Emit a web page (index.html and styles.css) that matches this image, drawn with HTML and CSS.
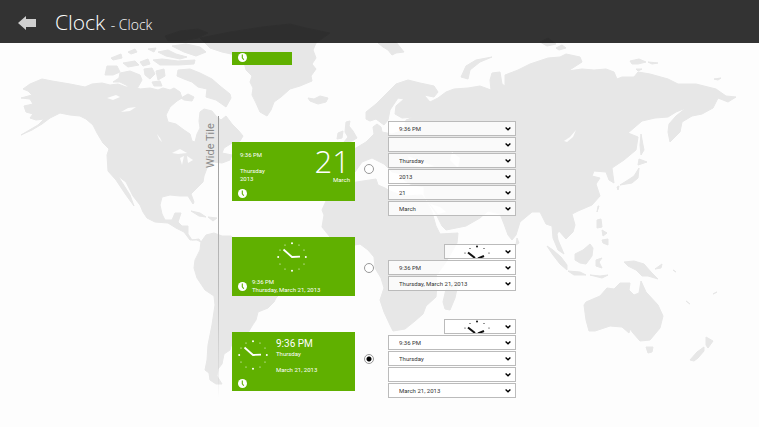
FILE: index.html
```html
<!DOCTYPE html>
<html lang="en">
<head>
    <meta charset="UTF-8">
    <meta name="viewport" content="width=device-width, initial-scale=1.0">
    <title>Clock</title>
    <link rel="stylesheet" href="styles.css">
</head>
<body>
    <svg class="map" viewBox="0 0 759 427" preserveAspectRatio="xMidYMin slice" aria-hidden="true">
        <!-- North America -->
        <path d="M23 89L30 84 42 79 52 81 70 84 85 87 92 84 102 83 110 85 118 84 126 87 134 86 140 89 150 88 158 90 163 88 170 90 174 88 180 92 182 98 177 101 170 107 166 115 168 122 176 124 184 130 190 134 192 141 195 142 197 134 200 128 199 121 200 112 204 109 212 111 216 116 221 120 226 116 232 124 238 130 243 136 240 141 232 143 224 148 222 153 232 155 230 160 222 163 214 162 207 168 204 176 203 182 196 189 191 194 194 202 193 204 188 196 180 196 170 195 162 197 160 205 162 214 165 220 172 220 175 213 181 213 178 222 182 226 188 226 188 234 192 240 199 239 201 242 197 240 190 240 184 232 176 228 168 223 155 222 147 218 143 212 140 205 133 196 126 182 118 176 130 195 134 206 126 195 116 180 108 171 107 155 109 149 103 143 97 133 93 125 86 119 80 116 70 115 60 113 50 118 42 124 32 130 21 135 38 125 44 119 36 120 30 118 33 114 26 112 24 106 33 104 30 99 21 98 32 95 28 91Z"/>
        <!-- Arctic islands -->
        <path d="M107 66L117 66 120 72 113 75 105 75ZM120 73L130 71 140 75 142 80 138 87 128 86 120 82 113 82 119 78ZM123 63L135 61 139 65 128 67ZM111 58L121 54 122 58 113 60ZM140 62L148 59 150 64 143 66ZM128 52L135 49 137 52 131 54ZM144 69L152 68 155 74 150 79 145 75ZM156 71L164 69 165 76 158 80ZM152 82L160 81 162 86 154 86ZM153 60L162 59 178 61 195 60 194 64 178 65 160 65ZM158 52L168 50 176 54 187 57 180 59 166 56ZM172 46L186 44 200 47 206 52 196 56 184 52ZM148 49L156 48 154 52ZM178 70L190 69 200 73 212 79 220 86 230 94 231 98 226 107 216 100 206 97 207 89 198 87 192 82 184 79 177 76ZM181 98L188 94 194 97 192 101 184 100ZM209 113L215 115 212 117Z"/>
        <path d="M165 36L180 31 198 29 208 33 198 38 182 41 168 41ZM200 38L230 32 262 27 290 24 306 28 330 33 316 43 313 50 316 58 312 64 316 69 311 76 312 81 300 86 290 89 281 97 274 102 271 110 267 116 260 112 256 103 252 95 253 88 250 82 252 76 246 70 244 62 236 55 222 52 210 48Z"/>
        <path d="M308 98L314 99 320 96 328 98 326 102 318 104 310 101Z"/>
        <!-- South and Central America -->
        <path d="M201 242L206 235 214 233 222 236 231 236 240 244 252 252 262 262 276 268 290 278 286 288 276 298 274 302 268 308 258 312 256 320 252 326 245 338 231 346 230 350 224 354 222 364 218 369 217 376 222 384 216 384 210 380 209 373 205 370 207 360 208 345 212 325 215 305 214 296 205 290 197 278 194 268 195 260 200 250ZM191 211L200 213 206 217 199 216ZM208 217L217 218 213 221Z"/>
        <!-- Africa -->
        <path d="M326 201L332 190 350 183 376 179 378 185 385 188 390 191 404 196 422 195 427 202 432 212 436 226 440 234 458 233 457 243 446 262 436 276 437 284 436 297 426 306 423 314 415 321 405 329 393 331 390 325 384 312 380 300 384 288 381 278 375 268 374 257 368 250 360 244 345 247 330 237 322 227 324 215 322 210ZM455 280L458 284 455 298 450 310 445 309 443 302 446 289Z"/>
        <!-- Europe and Asia -->
        <path d="M366 119L366 112 376 104 388 92 396 84 408 80 420 83 434 86 438 92 434 97 424 95 430 102 438 98 446 92 454 89 468 88 480 86 491 90 490 80 492 73 500 72 502 84 505 86 505 75 518 70 530 64 548 58 560 57 566 54 580 57 582 62 568 71 582 69 594 70 606 69 614 72 617 79 622 77 634 77 638 72 650 74 668 79 678 84 696 84 716 89 726 96 736 97 728 102 718 98 713 108 702 114 692 116 682 122 680 132 670 142 668 132 669 124 676 116 686 108 676 112 668 117 655 118 642 121 628 133 638 137 636 150 624 160 612 168 614 183 609 180 606 172 594 171 592 176 600 178 596 184 600 196 592 205 578 211 572 214 575 225 573 232 566 239 559 231 557 234 558 240 564 254 558 250 553 238 552 226 546 224 540 212 532 212 520 222 516 235 512 240 508 235 504 224 500 214 488 211 480 218 466 226 446 230 442 226 435 212 428 202 424 195 424 187 410 184 404 180 402 174 392 172 384 164 372 158 362 162 355 172 344 176 340 164 350 160 348 152 356 148 366 142 374 134 373 127 377 124 381 127 382 132 392 134 404 130 406 120 414 117 402 118 395 114 396 106 404 99 398 98 390 110 388 120 384 125 376 119 370 121Z"/>
        <path d="M346 122L350 121 349 126 353 131 357 138 352 141 344 142 348 137 345 132ZM338 133L343 131 342 138 337 139ZM461 77L466 66 476 60 492 57 480 62 470 70 468 79ZM378 43L396 42 404 52 396 53 392 55 388 50 383 47ZM540 42L548 38 556 44 547 46ZM556 48L562 45 566 48 559 50ZM630 61L639 59 646 62 638 64 632 64ZM648 62L658 63 652 64ZM636 69L642 69 638 71ZM714 79L721 78 718 80ZM641 134L643 145 644 150 641 155 640 145ZM639 159L647 162 638 165ZM639 168L638 178 632 183 620 185 628 180 634 176ZM617 187L619 186 618 190ZM599 206L597 212 598 206Z"/>
        <!-- South-east Asia and Oceania -->
        <path d="M547 246L553 250 561 257 567 265 567 270 560 264 553 255ZM568 271L580 272 586 275 574 275ZM590 275L600 276 608 275 602 278ZM575 254L583 250 590 244 593 248 592 256 586 264 580 263 575 260ZM596 260L602 258 599 262 602 268 596 266ZM597 220L601 219 602 227 597 228ZM602 230L607 233 603 236ZM602 240L608 239 608 245 603 243ZM517 238L519 243 516 245ZM624 262L634 261 644 264 651 272 658 279 648 276 642 276 636 270 628 266ZM655 269L662 264 661 268ZM673 270L676 272ZM686 301L690 304ZM713 294L717 292Z"/>
        <path d="M584 305L586 302 600 296 607 288 614 289 620 283 630 283 629 290 634 295 639 293 641 281 646 292 658 305 663 316 660 328 650 340 640 341 633 333 630 329 629 333 622 327 610 326 595 331 589 331 586 320ZM646 347L653 347 652 352 648 353ZM706 337L713 341 708 348 706 345ZM704 347L704 351 698 358 694 361 690 360 697 352Z"/>
        <!-- Lakes -->
        <path class="lake" d="M107 98L116 95 120 97 113 100ZM121 112L128 108 136 107 130 111ZM157 134L160 138 162 142 159 139ZM172 153L180 149 187 153 178 154ZM180 158L184 156 182 165ZM187 156L193 160 188 163ZM564 141L570 137 576 130 573 137 567 142ZM408 156L420 161 434 166 424 168 410 164ZM452 152L460 158 458 168 450 160ZM430 204L440 207 446 212 438 214Z"/>
    </svg>

    <header>
        <a class="back" href="#" aria-label="Back">
            <svg viewBox="0 0 18 14"><path d="M0 7L8 0V3H18V11H8V14Z"/></svg>
        </a>
        <h1>Clock <small>- Clock</small></h1>
    </header>

    <svg class="symbols" aria-hidden="true">
        <symbol id="badge" viewBox="0 0 9 9">
            <circle cx="4.5" cy="4.5" r="4.5" fill="#fff"/>
            <path d="M4.3 1.4V4.7L5.8 6.8" fill="none" stroke="#60b000" stroke-width="1.1"/>
        </symbol>
        <symbol id="dial" viewBox="0 0 30 30">
            <g fill="currentColor">
                <circle cx="15" cy="1.2" r="1"/><circle cx="28.8" cy="15" r="1"/>
                <circle cx="15" cy="28.8" r="1"/><circle cx="1.2" cy="15" r="1"/>
                <circle cx="22" cy="3" r=".6"/><circle cx="27" cy="8" r=".6"/>
                <circle cx="27" cy="22" r=".6"/><circle cx="22" cy="27" r=".6"/>
                <circle cx="8" cy="27" r=".6"/><circle cx="3" cy="22" r=".6"/>
                <circle cx="3" cy="8" r=".6"/><circle cx="8" cy="3" r=".6"/>
            </g>
            <path d="M6.5 7.5L15 15 23 14.6" fill="none" stroke="currentColor" stroke-width="1.8"/>
        </symbol>
        <symbol id="dial-top" viewBox="0 0 26 13">
            <g fill="currentColor">
                <circle cx="13" cy="1.5" r="1"/><circle cx="6" cy="3.5" r=".6"/>
                <circle cx="20" cy="3.5" r=".6"/><circle cx="1" cy="8" r=".6"/>
                <circle cx="25" cy="8" r=".6"/>
            </g>
            <path d="M4 7.5L11 13M14 13.5L20 11" fill="none" stroke="currentColor" stroke-width="2"/>
        </symbol>
    </svg>

    <main>
        <div class="tile tile-small"><svg class="badge"><use href="#badge"/></svg></div>

        <section class="wide">
            <h2>Wide Tile</h2>
            <div class="tiles">
                <div class="tile tile-date">
                    <div class="lines">
                        <p>9:36 PM</p>
                        <p>&nbsp;</p>
                        <p>Thursday</p>
                        <p>2013</p>
                    </div>
                    <div class="day">
                        <strong>21</strong>
                        <p>March</p>
                    </div>
                    <svg class="badge"><use href="#badge"/></svg>
                </div>
                <div class="tile tile-center">
                    <svg class="dial"><use href="#dial"/></svg>
                    <div class="caption">
                        <svg class="badge"><use href="#badge"/></svg>
                        <div>
                            <p>9:36 PM</p>
                            <p>Thursday, March 21, 2013</p>
                        </div>
                    </div>
                </div>
                <div class="tile tile-side">
                    <svg class="dial"><use href="#dial"/></svg>
                    <div class="lines">
                        <p class="time">9:36 PM</p>
                        <p>Thursday</p>
                        <p>&nbsp;</p>
                        <p>March 21, 2013</p>
                    </div>
                    <svg class="badge"><use href="#badge"/></svg>
                </div>
            </div>

            <form class="options">
                <div class="option">
                    <input type="radio" name="layout" aria-label="Date layout">
                    <div class="fields">
                        <select aria-label="Line 1"><option>9:36 PM</option></select>
                        <select aria-label="Line 2"><option></option></select>
                        <select aria-label="Line 3"><option>Thursday</option></select>
                        <select aria-label="Line 4"><option>2013</option></select>
                        <select aria-label="Large number"><option>21</option></select>
                        <select aria-label="Number caption"><option>March</option></select>
                    </div>
                </div>
                <div class="option">
                    <input type="radio" name="layout" aria-label="Centered clock layout">
                    <div class="fields">
                        <div class="picture">
                            <select aria-label="Clock face"><option></option></select>
                            <svg><use href="#dial-top"/></svg>
                        </div>
                        <select aria-label="Line 1"><option>9:36 PM</option></select>
                        <select aria-label="Line 2"><option>Thursday, March 21, 2013</option></select>
                    </div>
                </div>
                <div class="option">
                    <input type="radio" name="layout" aria-label="Side clock layout" checked>
                    <div class="fields">
                        <div class="picture">
                            <select aria-label="Clock face"><option></option></select>
                            <svg><use href="#dial-top"/></svg>
                        </div>
                        <select aria-label="Heading"><option>9:36 PM</option></select>
                        <select aria-label="Line 1"><option>Thursday</option></select>
                        <select aria-label="Line 2"><option></option></select>
                        <select aria-label="Line 3"><option>March 21, 2013</option></select>
                    </div>
                </div>
            </form>
        </section>
    </main>
</body>
</html>
```

FILE: styles.css
```css
* {
    box-sizing: border-box;
}
body {
    margin: 0;
    min-height: 100vh;
    position: relative;
    background-color: #fdfdfd;
    font-family: Roboto, "Open Sans", sans-serif;
    font-size: 6px;
    line-height: 8px;
    color: #333;
}
h1, h2, p {
    margin: 0;
    font-weight: normal;
}
.map {
    position: absolute;
    top: 0;
    left: 0;
    width: 100%;
    height: 100%;
    z-index: -1;
    fill: #e7e7e7;
    stroke: #e7e7e7;
    stroke-linejoin: round;
}
.map .lake {
    fill: #fdfdfd;
    stroke: none;
}
.symbols {
    display: none;
}
header {
    display: flex;
    align-items: center;
    gap: 19px;
    height: 43px;
    padding: 3px 0 0 18px;
    background: rgba(0, 0, 0, 0.8);
    color: #fff;
}
.back svg {
    display: block;
    width: 18px;
    height: 14px;
    fill: #d0d0d0;
}
h1 {
    font-family: "Open Sans", "Noto Sans", sans-serif;
    font-size: 21px;
    font-weight: 300;
    line-height: 40px;
}
h1 small {
    font-size: 14px;
}
main {
    padding: 9px 0 20px 204px;
}

/* tiles */
.tile {
    width: 123px;
    height: 59px;
    background-color: #60b000;
    color: #fff;
}
.tile-small {
    width: 60px;
    height: 13px;
    margin: 0 0 51px 28px;
    padding: 1px 6px;
}
.badge {
    display: block;
    width: 9px;
    height: 9px;
}
.dial {
    display: block;
    width: 30px;
    height: 30px;
}
.tile-date, .tile-side {
    display: grid;
    grid-template-rows: 1fr auto;
    padding: 0 5px 3px 6px;
}
.tile-date {
    grid-template-columns: 1fr auto;
}
.tile-date .lines {
    padding: 9px 2px 0;
}
.day {
    text-align: right;
}
.day strong {
    display: block;
    font-family: "Open Sans", "Noto Sans", sans-serif;
    font-size: 31px;
    font-weight: 300;
    line-height: 30px;
    padding-top: 4px;
}
.tile-center {
    display: flex;
    flex-direction: column;
    justify-content: space-between;
    padding: 5px 10px 2px 6px;
}
.tile-center .dial {
    align-self: center;
}
.caption {
    display: flex;
    align-items: center;
    gap: 5px;
}
.tile-side {
    grid-template-columns: 30px 1fr;
    column-gap: 8px;
}
.tile-side .dial {
    margin-top: 8px;
}
.tile-side .lines {
    padding-top: 6px;
}
.time {
    font-size: 10px;
    line-height: 12px;
}

/* wide tile section */
.wide {
    display: flex;
    align-items: flex-start;
}
h2 {
    align-self: stretch;
    padding-bottom: 7px;
    width: 15px;
    writing-mode: vertical-rl;
    transform: rotate(180deg);
    text-align: right;
    font-size: 11px;
    line-height: 14px;
    color: #888;
    background: linear-gradient(to top, #999, #bbb 60%, transparent) left / 1px 100% no-repeat;
}
.tiles {
    display: flex;
    flex-direction: column;
    gap: 36px;
    padding: 26px 9px 0 13px;
}
.options {
    display: flex;
    flex-direction: column;
    gap: 28px;
    padding-top: 5px;
}
.option {
    display: flex;
    align-items: center;
    gap: 14px;
}
.fields {
    display: flex;
    flex-direction: column;
    align-items: flex-end;
    gap: 1px;
}
input[type="radio"] {
    appearance: none;
    margin: 0;
    width: 10px;
    height: 10px;
    border: 1px solid #999;
    border-radius: 50%;
    background-color: #fff;
}
input[type="radio"]:checked {
    background-image: radial-gradient(circle, #000 2px, transparent 3px);
}
select {
    appearance: none;
    display: block;
    width: 128px;
    height: 15px;
    margin: 0;
    padding: 0 10px;
    border: 1px solid #bbb;
    border-radius: 0;
    font: inherit;
    color: #333;
    background: rgba(255, 255, 255, 0.8) url("data:image/svg+xml,%3Csvg xmlns='http://www.w3.org/2000/svg' width='6' height='4'%3E%3Cpath d='M.6.6L3 2.8 5.4.6' fill='none' stroke='%23000' stroke-width='1.4'/%3E%3C/svg%3E") right 4px center no-repeat;
}
.picture {
    position: relative;
}
.picture select {
    width: 72px;
}
.picture svg {
    position: absolute;
    left: 20px;
    top: 1px;
    width: 26px;
    height: 13px;
    color: #111;
    pointer-events: none;
}
```
